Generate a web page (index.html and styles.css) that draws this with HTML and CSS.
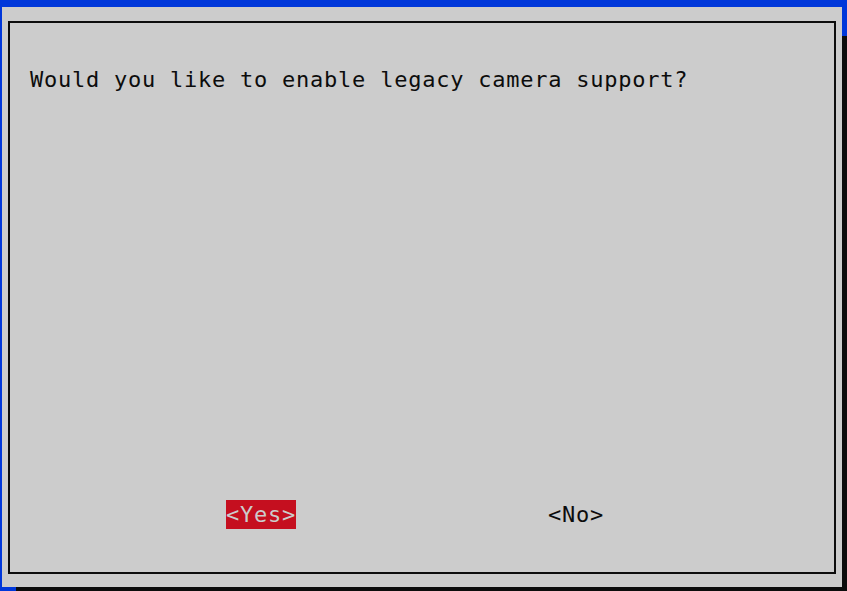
FILE: index.html
```html
<!DOCTYPE html>
<html lang="en">
<head>
  <meta charset="UTF-8" />
  <meta name="viewport" content="width=device-width, initial-scale=1.0"/>
  <title>raspi-config</title>
  <link rel="stylesheet" href="styles.css">
</head>
<body>
  <div class="dialog">
    <div class="frame">
      <p class="question">Would you like to enable legacy camera support?</p>
      <div class="buttons">
        <span class="btn selected">&lt;Yes&gt;</span>
        <span class="btn">&lt;No&gt;</span>
      </div>
    </div>
  </div>
</body>
</html>
```

FILE: styles.css
```css
* {
  margin: 0;
  padding: 0;
  box-sizing: border-box;
}
html, body {
  width: 847px;
  height: 591px;
  overflow: hidden;
}
body {
  background: #0037da;
  color: #0c0c0c;
  font-family: 'DejaVu Sans Mono', 'Liberation Mono', monospace;
  font-size: 22px;
  letter-spacing: 0.76px;
  line-height: 29px;
  padding: 7px 0 0 2px;
}
.dialog {
  width: 840px;
  height: 580px;
  background: #cccccc;
  box-shadow: 14px 29px 0 #0c0c0c;
  padding: 14px 6px 13px 6px;
}
.frame {
  height: 100%;
  border: 2px solid #0c0c0c;
  display: flex;
  flex-direction: column;
  padding: 42px 0 43px 20px;
}
.question {
  white-space: pre;
}
.buttons {
  margin-top: auto;
  display: flex;
  gap: 252px;
  padding-left: 196px;
}
.btn {
  white-space: pre;
}
.btn.selected {
  background: #c50f1f;
  color: #cccccc;
}
```
